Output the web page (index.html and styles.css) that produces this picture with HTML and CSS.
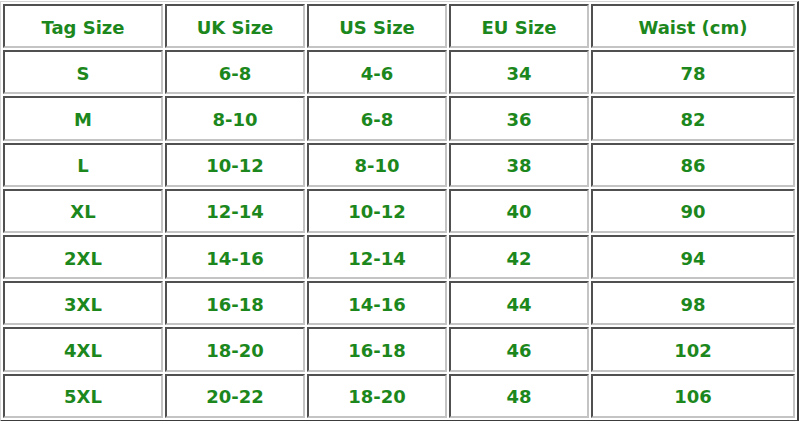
FILE: index.html
```html
<!DOCTYPE html>
<html>
<head>
<meta charset="utf-8">
<title>Size Chart</title>
<link rel="stylesheet" href="styles.css">
</head>
<body>
<table class="chart">
  <colgroup>
    <col class="c1"><col class="c2"><col class="c3"><col class="c4"><col class="c5">
  </colgroup>
  <tr><td>Tag Size</td><td>UK Size</td><td>US Size</td><td>EU Size</td><td>Waist (cm)</td></tr>
  <tr><td>S</td><td>6-8</td><td>4-6</td><td>34</td><td>78</td></tr>
  <tr><td>M</td><td>8-10</td><td>6-8</td><td>36</td><td>82</td></tr>
  <tr><td>L</td><td>10-12</td><td>8-10</td><td>38</td><td>86</td></tr>
  <tr><td>XL</td><td>12-14</td><td>10-12</td><td>40</td><td>90</td></tr>
  <tr><td>2XL</td><td>14-16</td><td>12-14</td><td>42</td><td>94</td></tr>
  <tr><td>3XL</td><td>16-18</td><td>14-16</td><td>44</td><td>98</td></tr>
  <tr><td>4XL</td><td>18-20</td><td>16-18</td><td>46</td><td>102</td></tr>
  <tr><td>5XL</td><td>20-22</td><td>18-20</td><td>48</td><td>106</td></tr>
</table>
</body>
</html>
```
FILE: styles.css
```css
html, body {
  margin: 0;
  padding: 0;
  background: #ffffff;
}
.chart {
  margin: 1px 0 0 0;
  width: 799px;
  table-layout: fixed;
  border-collapse: separate;
  border-spacing: 2px;
  border-style: solid;
  border-width: 1px 2px 2px 1px;
  border-color: #d4d4d4 #3c3c3c #3c3c3c #d4d4d4;
  font-family: "DejaVu Sans", Verdana, sans-serif;
  font-weight: bold;
  font-size: 18px;
  color: #1c871c;
}
.c1 { width: 160px; }
.c2 { width: 140px; }
.c3 { width: 140px; }
.c4 { width: 140px; }
.c5 { width: 204px; }
.chart td {
  box-sizing: border-box;
  height: 44.2px;
  padding: 2px 0 0 0;
  text-align: center;
  vertical-align: middle;
  border-style: solid;
  border-width: 2px;
  border-color: #505050 #c4c4c4 #c4c4c4 #505050;
}
```
